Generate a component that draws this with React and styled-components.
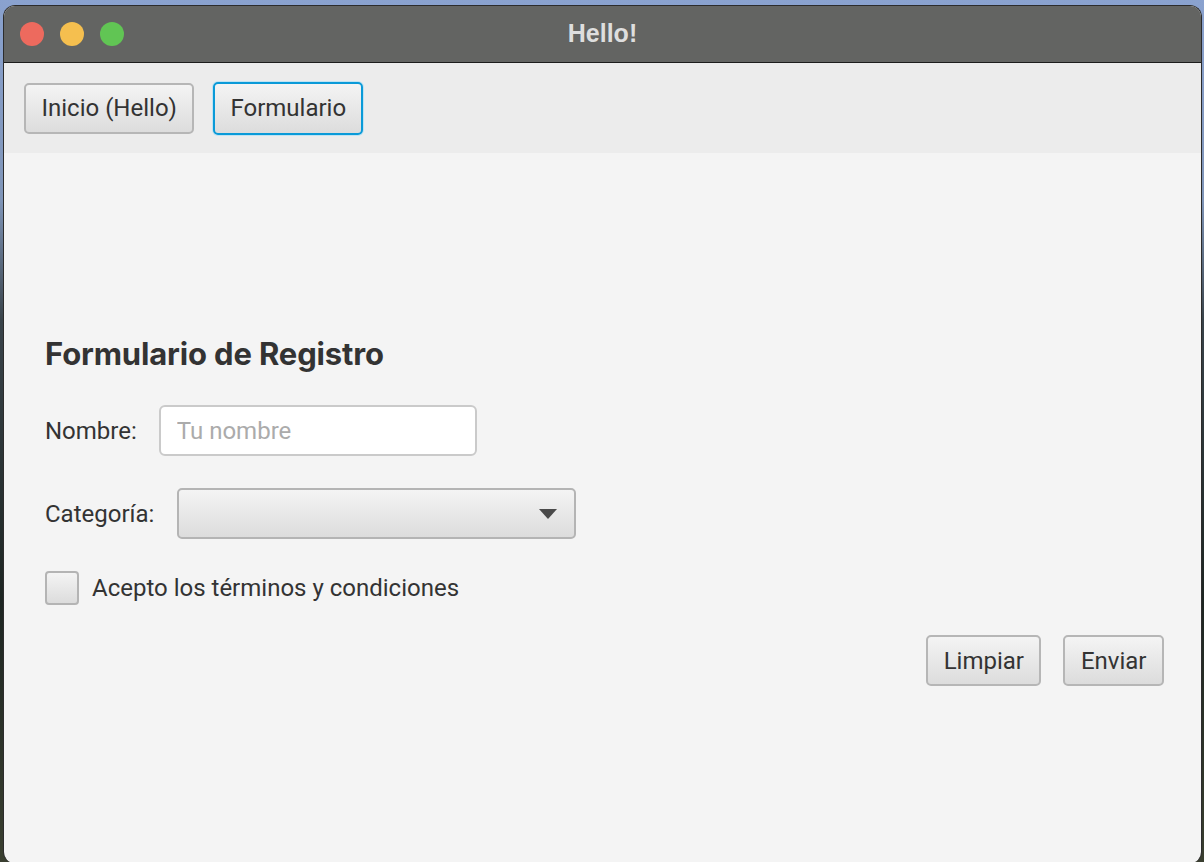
import React from "react";
import styled, { createGlobalStyle } from "styled-components";

const GlobalStyle = createGlobalStyle`
  html, body {
    margin: 0;
    padding: 0;
    height: 100%;
    overflow: hidden;
  }
  body {
    background: linear-gradient(to bottom, #8aa2cf 0px, #7f95b8 200px, #39434a 320px, #1d2522 600px, #3a3f30 862px);
    font-family: Roboto, "Liberation Sans", sans-serif;
  }
`;

const Window = styled.div`
  margin: 5px 2px 0 3px;
  height: 857px;
  display: flex;
  flex-direction: column;
  border-radius: 12px 12px 11px 11px;
  overflow: hidden;
  border: 1px solid #2c2c2c;
  border-bottom: none;
  background: #f4f4f4;
`;

const TitleBar = styled.div`
  position: relative;
  height: 56px;
  flex: none;
  display: flex;
  align-items: center;
  justify-content: center;
  background: #636462;
  border-bottom: 1px solid #1c1c1c;
`;

const Lights = styled.div`
  position: absolute;
  left: 16px;
  top: 16px;
  display: flex;
  gap: 16px;
`;

const Light = styled.span`
  width: 24px;
  height: 24px;
  border-radius: 50%;
  background: ${(p) => p.color};
`;

const Title = styled.div`
  font-family: "Liberation Sans", Arial, sans-serif;
  font-weight: bold;
  font-size: 25px;
  color: #dedede;
  margin-top: -2px;
`;

const ToolBar = styled.div`
  height: 90px;
  flex: none;
  display: flex;
  align-items: center;
  gap: 19px;
  padding: 0 20px;
  background: #ececec;
`;

const Button = styled.button`
  height: ${(p) => (p.focused ? "53px" : "51px")};
  padding: 0 ${(p) => (p.focused ? "15px" : "15.5px")};
  font-family: Roboto, "Liberation Sans", sans-serif;
  font-size: 24px;
  color: #333;
  border-radius: 5px;
  background: linear-gradient(to bottom, #f4f4f4, #dcdcdc);
  border: ${(p) => (p.focused ? "2px solid #0a9ad8" : "2px solid #b6b6b6")};
  box-shadow: ${(p) => (p.focused ? "0 0 0 1px #bfe3f3" : "none")};
  cursor: pointer;
`;

const Content = styled.div`
  flex: 1;
  display: flex;
  flex-direction: column;
  padding: 182px 37px 0 41px;
`;

const Heading = styled.h1`
  margin: 0 0 32px;
  font-family: Inter, Roboto, sans-serif;
  font-size: 31px;
  font-weight: bold;
  letter-spacing: -0.15px;
  color: #333;
  line-height: 38px;
`;

const Row = styled.div`
  display: flex;
  align-items: center;
  gap: ${(p) => p.gap || 22}px;
  margin-bottom: ${(p) => p.spacing || 32}px;
`;

const Label = styled.label`
  font-size: 24px;
  color: #333;
`;

const TextInput = styled.input`
  box-sizing: border-box;
  width: 318px;
  height: 51px;
  padding: 0 16px;
  border: 2px solid #cacaca;
  border-radius: 6px;
  background: #fff;
  font-family: Roboto, "Liberation Sans", sans-serif;
  font-size: 24px;
  color: #333;
  outline: none;
  &::placeholder {
    color: #ababab;
  }
`;

const Select = styled.div`
  box-sizing: border-box;
  width: 399px;
  height: 51px;
  margin-left: 1px;
  display: flex;
  align-items: center;
  justify-content: flex-end;
  padding-right: 17px;
  border: 2px solid #b4b4b4;
  border-radius: 5px;
  background: linear-gradient(to bottom, #f4f4f4, #dcdcdc);
`;

const Check = styled.span`
  box-sizing: border-box;
  width: 34px;
  height: 34px;
  border: 2px solid #b4b4b4;
  border-radius: 4px;
  background: linear-gradient(to bottom, #f4f4f4, #dcdcdc);
`;

const Actions = styled.div`
  display: flex;
  justify-content: flex-end;
  gap: 22px;
`;

export default function App() {
  return (
    <>
      <GlobalStyle />
      <Window>
        <TitleBar>
          <Lights>
            <Light color="#ed6a5e" />
            <Light color="#f5bf4f" />
            <Light color="#61c554" />
          </Lights>
          <Title>Hello!</Title>
        </TitleBar>

        <ToolBar>
          <Button>Inicio (Hello)</Button>
          <Button focused>Formulario</Button>
        </ToolBar>

        <Content>
          <Heading>Formulario de Registro</Heading>

          <Row>
            <Label>Nombre:</Label>
            <TextInput placeholder="Tu nombre" />
          </Row>

          <Row>
            <Label>Categoría:</Label>
            <Select>
              <svg width="18" height="10" viewBox="0 0 18 10">
                <polygon points="0,0 18,0 9,10" fill="#4a4a4a" />
              </svg>
            </Select>
          </Row>

          <Row gap={13} spacing={30}>
            <Check />
            <Label>Acepto los términos y condiciones</Label>
          </Row>

          <Actions>
            <Button>Limpiar</Button>
            <Button>Enviar</Button>
          </Actions>
        </Content>
      </Window>
    </>
  );
}
